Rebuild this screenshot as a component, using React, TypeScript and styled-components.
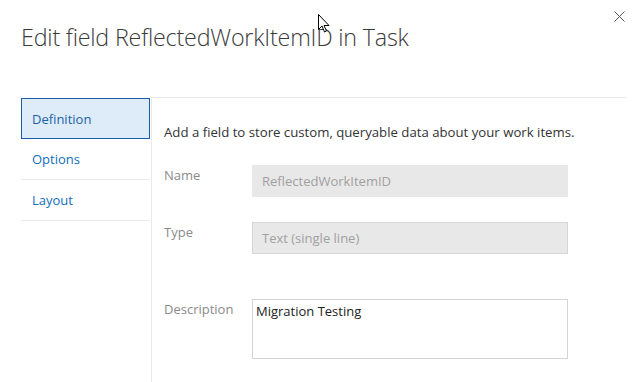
import styled, { createGlobalStyle } from "styled-components";

const GlobalStyle = createGlobalStyle`
  html, body {
    margin: 0;
    padding: 0;
    background: #ffffff;
  }
  body {
    font-family: "Open Sans", "Noto Sans", sans-serif;
    color: #333333;
  }
`;

const Dialog = styled.div`
  position: relative;
  width: 641px;
  height: 382px;
  overflow: hidden;
  padding: 0 15px 0 21px;
  box-sizing: border-box;
  display: flex;
  flex-direction: column;
`;

const Header = styled.div`
  height: 97px;
  display: flex;
  justify-content: space-between;
  align-items: flex-start;
`;

const Title = styled.h1`
  margin: 20px 0 0 0;
  font-size: 23.3px;
  line-height: 34px;
  font-weight: 300;
  color: #3a3a3a;
  letter-spacing: -0.2px;
`;

const CloseButton = styled.button`
  margin-top: 10px;
  width: 13px;
  height: 13px;
  padding: 0;
  border: none;
  background: none;
  display: flex;
  align-items: center;
  justify-content: center;
`;

const Cursor = styled.svg`
  position: absolute;
  left: 318px;
  top: 14px;
`;

const Body = styled.div`
  flex: 1;
  display: flex;
`;

const Nav = styled.nav`
  width: 130px;
  margin-top: 1px;
  display: flex;
  flex-direction: column;
`;

const NavItem = styled.div<{ selected?: boolean }>`
  width: 129px;
  height: 41px;
  box-sizing: border-box;
  display: flex;
  align-items: center;
  font-size: 13px;
  color: ${(p) => (p.selected ? "#1a5fa6" : "#106ebe")};
  background: ${(p) => (p.selected ? "#deecf9" : "transparent")};
  border: ${(p) => (p.selected ? "1px solid #1a5fa6" : "none")};
  border-bottom: 1px solid ${(p) => (p.selected ? "#1a5fa6" : "#eaeaea")};
  padding-left: ${(p) => (p.selected ? "10px" : "11px")};
`;

const Content = styled.section`
  flex: 1;
  border-top: 1px solid #eaeaea;
  border-left: 1px solid #eaeaea;
  padding: 24px 0 0 12px;
`;

const Intro = styled.p`
  margin: 0 0 23px 0;
  font-size: 13.2px;
  line-height: 20px;
  color: #333333;
`;

const FieldRow = styled.div<{ gap: number }>`
  display: flex;
  align-items: flex-start;
  margin-bottom: ${(p) => p.gap}px;
`;

const Label = styled.label`
  width: 88px;
  flex-shrink: 0;
  font-size: 13px;
  line-height: 20px;
  color: #8a8a8a;
`;

const ReadOnlyInput = styled.div<{ bordered?: boolean }>`
  width: 316px;
  height: 32px;
  box-sizing: border-box;
  background: #e8e8e8;
  border: 1px solid ${(p) => (p.bordered ? "#d6d6d6" : "#e8e8e8")};
  padding: 0 9px;
  display: flex;
  align-items: center;
  font-size: 13px;
  color: #a0a0a0;
`;

const TextArea = styled.div`
  width: 316px;
  height: 60px;
  box-sizing: border-box;
  border: 1px solid #d4d4d4;
  padding: 1px 3px;
  font-size: 13px;
  line-height: 20px;
  color: #222222;
`;

export default function App() {
  return (
    <>
      <GlobalStyle />
      <Dialog>
        <Header>
          <Title>Edit field ReflectedWorkItemID in Task</Title>
          <CloseButton aria-label="Close">
            <svg width="11" height="11" viewBox="0 0 11 11">
              <path
                d="M0.5 0.5 L10.5 10.5 M10.5 0.5 L0.5 10.5"
                stroke="#555555"
                strokeWidth="1"
              />
            </svg>
          </CloseButton>
        </Header>
        <Body>
          <Nav>
            <NavItem selected>Definition</NavItem>
            <NavItem>Options</NavItem>
            <NavItem>Layout</NavItem>
          </Nav>
          <Content>
            <Intro>
              Add a field to store custom, queryable data about your work items.
            </Intro>
            <FieldRow gap={25}>
              <Label>Name</Label>
              <ReadOnlyInput>ReflectedWorkItemID</ReadOnlyInput>
            </FieldRow>
            <FieldRow gap={45}>
              <Label>Type</Label>
              <ReadOnlyInput bordered>Text (single line)</ReadOnlyInput>
            </FieldRow>
            <FieldRow gap={0}>
              <Label>Description</Label>
              <TextArea>Migration Testing</TextArea>
            </FieldRow>
          </Content>
        </Body>
        <Cursor width="13" height="20" viewBox="0 0 13 20">
          <path
            d="M0.5 0.5 L0.5 15.5 L4 12 L6.5 18 L8.5 17 L6 11.5 L11 11.5 Z"
            fill="#ffffff"
            stroke="#000000"
            strokeWidth="1"
            strokeLinejoin="round"
          />
        </Cursor>
      </Dialog>
    </>
  );
}
